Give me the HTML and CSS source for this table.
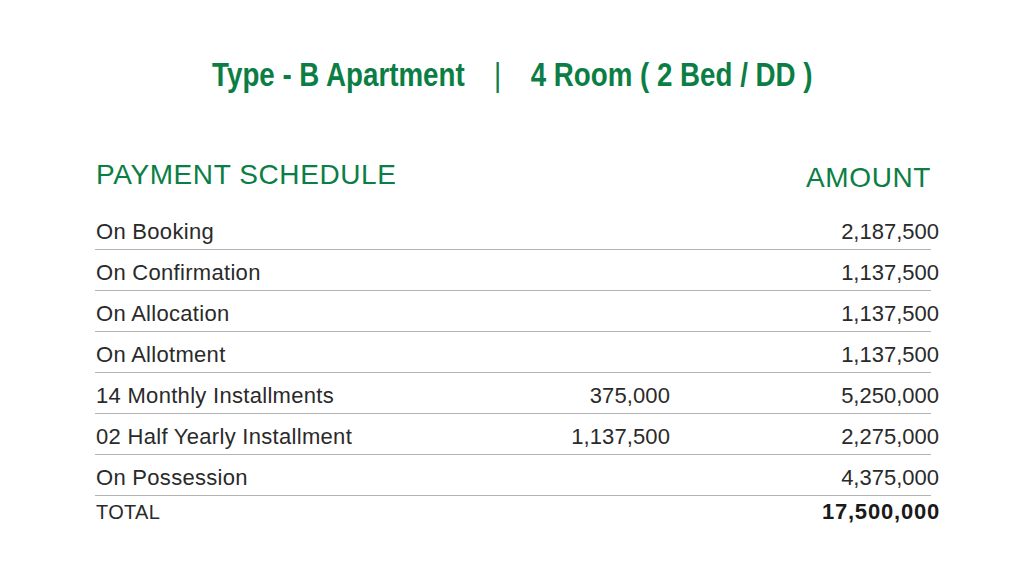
FILE: index.html
```html
<!DOCTYPE html>
<html lang="en">
<head>
<meta charset="utf-8">
<title>Type - B Apartment Payment Schedule</title>
<link rel="stylesheet" href="styles.css">
</head>
<body>
<main class="page">
  <h1 class="title">
    <span>Type - B Apartment</span>
    <span class="sep">|</span>
    <span>4 Room ( 2 Bed / DD )</span>
  </h1>
  <section class="schedule">
    <div class="head">
      <h2 class="head-label">PAYMENT SCHEDULE</h2>
      <h2 class="head-amount">AMOUNT</h2>
    </div>
    <div class="row"><span class="label">On Booking</span><span class="mid"></span><span class="amt">2,187,500</span></div>
    <div class="row"><span class="label">On Confirmation</span><span class="mid"></span><span class="amt">1,137,500</span></div>
    <div class="row"><span class="label">On Allocation</span><span class="mid"></span><span class="amt">1,137,500</span></div>
    <div class="row"><span class="label">On Allotment</span><span class="mid"></span><span class="amt">1,137,500</span></div>
    <div class="row"><span class="label">14 Monthly Installments</span><span class="mid">375,000</span><span class="amt">5,250,000</span></div>
    <div class="row"><span class="label">02 Half Yearly Installment</span><span class="mid">1,137,500</span><span class="amt">2,275,000</span></div>
    <div class="row"><span class="label">On Possession</span><span class="mid"></span><span class="amt">4,375,000</span></div>
    <div class="row total"><span class="label">TOTAL</span><span class="mid"></span><span class="amt">17,500,000</span></div>
  </section>
</main>
</body>
</html>
```
FILE: styles.css
```css
html, body {
  margin: 0;
  padding: 0;
  background: #ffffff;
}
body {
  width: 1024px;
  height: 565px;
  overflow: hidden;
  font-family: "Liberation Sans", Arial, sans-serif;
  color: #222222;
}
.page {
  padding-top: 55px;
}
.title {
  margin: 0;
  display: flex;
  justify-content: center;
  gap: 35px;
  font-family: "Liberation Sans", Arial, sans-serif;
  font-weight: 700;
  font-size: 33px;
  line-height: 40px;
  color: #0b7e45;
  transform: scaleX(0.84);
  transform-origin: 514px 0;
}
.title .sep {
  font-weight: 400;
}
.schedule {
  margin: 64px 0 0 95px;
  width: 836px;
}
.head {
  display: flex;
  justify-content: space-between;
  margin-bottom: 15px;
}
.head h2 {
  margin: 0;
  font-weight: 400;
  font-size: 28px;
  line-height: 32px;
  letter-spacing: 0.6px;
  color: #0b7e45;
}
.head-label {
  padding-left: 1px;
}
.head-amount {
  padding-top: 3px;
  letter-spacing: 0.9px;
  margin-right: -2px;
}
.row {
  display: grid;
  grid-template-columns: 1fr 200px 261px;
  padding: 12px 0 6px;
  border-bottom: 1px solid #b4b4b4;
  font-size: 22px;
  line-height: 22px;
  letter-spacing: 0.3px;
  color: #2a2a2a;
}
.label {
  padding-left: 1px;
}
.mid {
  text-align: right;
  letter-spacing: 0.1px;
}
.amt {
  text-align: right;
  margin-right: -8px;
  letter-spacing: 0;
}
.row.total {
  border-bottom: none;
  padding-top: 5px;
}
.row.total .label {
  font-size: 20px;
}
.row.total .amt {
  font-weight: 700;
  letter-spacing: 0.8px;
  color: #1a1a1a;
  margin-right: -9px;
}
```
